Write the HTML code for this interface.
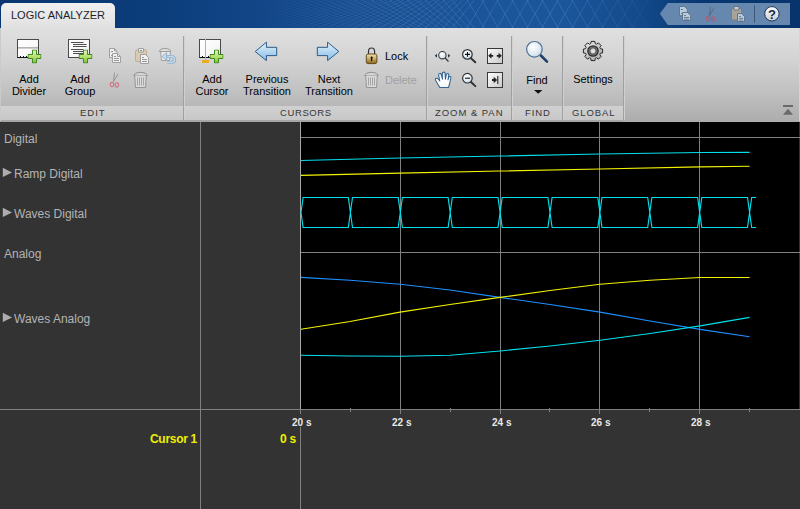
<!DOCTYPE html>
<html><head><meta charset="utf-8">
<style>
html,body{margin:0;padding:0;width:800px;height:509px;overflow:hidden;background:#333;}
body{position:relative;font-family:"Liberation Sans",sans-serif;}
.a{position:absolute;white-space:nowrap;}
#title{left:0;top:0;width:800px;height:28px;background:linear-gradient(90deg,#083670 0px,#0b3d7a 150px,#14498c 300px,#1a5398 450px,#1b569b 560px,#134a8b 640px,#083670 700px,#07346c 800px);}
#tab{left:1px;top:3px;width:114px;height:26px;border-radius:5px 5px 0 0;background:linear-gradient(#f0f0f0,#e0e0e0);}
#toolbar{left:0;top:28px;width:800px;height:94px;background:linear-gradient(#e0e0e0 0px,#d4d4d4 30px,#c0c0c0 65px,#adadad 93px);}
#band{left:0;top:106px;width:623px;height:14px;background:linear-gradient(#d0d0d0,#c8c8c8);}
#tbline{left:0;top:120px;width:623px;height:1.5px;background:#a6a6a6;}
.lbl{font-size:11px;color:#000;line-height:12px;text-align:center;}
.sec{font-size:9.5px;color:#363636;line-height:12px;}
.sep{width:1px;background:#a0a0a0;box-shadow:1px 0 0 #d0d0d0;}
.sig{font-size:12px;color:#b4b4b4;line-height:14px;}
</style></head><body>
<div id="title" class="a"></div>

<svg class="a" style="left:0;top:0;" width="800" height="28" viewBox="0 0 800 28">
<defs>
<linearGradient id="meshmask" x1="0" y1="0" x2="1" y2="0"><stop offset="0.32" stop-color="#fff" stop-opacity="0"/><stop offset="0.5" stop-color="#fff" stop-opacity="0.8"/><stop offset="0.7" stop-color="#fff" stop-opacity="1"/><stop offset="0.79" stop-color="#fff" stop-opacity="0.4"/><stop offset="0.83" stop-color="#fff" stop-opacity="0"/></linearGradient>
<mask id="mm"><rect x="0" y="0" width="800" height="28" fill="url(#meshmask)"/></mask>
<linearGradient id="gqhelp" x1="0" y1="0" x2="0" y2="1"><stop offset="0" stop-color="#ffffff"/><stop offset="1" stop-color="#c8d0d8"/></linearGradient>
</defs>
<g mask="url(#mm)" fill="none" stroke="#7aa4d8" stroke-opacity="0.35" stroke-width="0.8">
<path d="M200.0,28L290.0,0M209.0,28L299.0,0M218.0,28L308.0,0M227.0,28L317.0,0M236.0,28L326.0,0M245.0,28L335.0,0M254.0,28L344.0,0M263.0,28L351.9,0M272.0,28L357.8,0M281.0,28L363.6,0M290.0,28L369.4,0M299.0,28L375.3,0M308.0,28L381.1,0M317.0,28L386.9,0M326.0,28L392.7,0M335.0,28L398.6,0M344.0,28L404.4,0M353.0,28L410.2,0M362.0,28L416.1,0M371.0,28L421.9,0M380.0,28L427.7,0M389.0,28L433.5,0M398.0,28L439.4,0M407.0,28L445.2,0M416.0,28L451.0,0M425.0,28L456.9,0M434.0,28L462.7,0M443.0,28L468.5,0M452.0,28L474.3,0M467.0,28L484.1,0M482.0,28L498.0,0M497.0,28L513.0,0M512.0,28L528.0,0M527.0,28L543.0,0M542.0,28L558.0,0M557.0,28L573.0,0M572.0,28L588.0,0M587.0,28L603.0,0M602.0,28L618.0,0M617.0,28L633.0,0M632.0,28L648.0,0M647.0,28L663.0,0M662.0,28L678.0,0M677.0,28L693.0,0M692.0,28L708.0,0"/>
<path d="M200.0,0L290.0,28M209.0,0L299.0,28M218.0,0L308.0,28M227.0,0L317.0,28M236.0,0L326.0,28M245.0,0L335.0,28M254.0,0L344.0,28M263.0,0L351.9,28M272.0,0L357.8,28M281.0,0L363.6,28M290.0,0L369.4,28M299.0,0L375.3,28M308.0,0L381.1,28M317.0,0L386.9,28M326.0,0L392.7,28M335.0,0L398.6,28M344.0,0L404.4,28M353.0,0L410.2,28M362.0,0L416.1,28M371.0,0L421.9,28M380.0,0L427.7,28M389.0,0L433.5,28M398.0,0L439.4,28M407.0,0L445.2,28M416.0,0L451.0,28M425.0,0L456.9,28M434.0,0L462.7,28M443.0,0L468.5,28M452.0,0L474.3,28M467.0,0L484.1,28M482.0,0L498.0,28M497.0,0L513.0,28M512.0,0L528.0,28M527.0,0L543.0,28M542.0,0L558.0,28M557.0,0L573.0,28M572.0,0L588.0,28M587.0,0L603.0,28M602.0,0L618.0,28M617.0,0L633.0,28M632.0,0L648.0,28M647.0,0L663.0,28M662.0,0L678.0,28M677.0,0L693.0,28M692.0,0L708.0,28"/>
</g>
<path d="M659.8,13.8L667.8,3H790V25H667.8Z" fill="#6687ae"/>
<g>
<path d="M679.5,6.5H684.5L687.3,9.3V15.7H679.5Z" fill="#b8cadc" stroke="#60768e"/>
<path d="M682.5,12.5H687.5L690.5,15.5V20.5H682.5Z" fill="#b8cadc" stroke="#60768e"/>
<path d="M681,9.5H683M681,13.5H682M684,15.5H686M684,17.5H689M684,19.2H689" stroke="#60768e" stroke-width="0.9"/>
</g>
<path d="M710.4,6.5L709.6,15.6M714,7.7L709.6,15.6" stroke="#55667a" stroke-width="0.9"/>
<ellipse cx="708" cy="18.5" rx="1.5" ry="2.1" fill="none" stroke="#b05a70" stroke-width="1.1"/>
<ellipse cx="713" cy="18.9" rx="1.5" ry="2.1" fill="none" stroke="#b05a70" stroke-width="1.1"/>
<g>
<rect x="731.5" y="8.5" width="10" height="11.5" rx="1" fill="#a8a498" stroke="#807c72"/>
<path d="M734,10V6.5H739V10Z" fill="#c4ccd4" stroke="#6a7684"/>
<path d="M737.5,13.5H741.5L744.5,16.5V21.5H737.5Z" fill="#b8cadc" stroke="#60768e"/>
<path d="M739,16.5H741M739,18.3H743M739,20H743" stroke="#60768e" stroke-width="0.9"/>
</g>
<path d="M754.5,5.3V22.7" stroke="#3f5674" stroke-width="1"/>
<circle cx="771.9" cy="13.8" r="7.2" fill="url(#gqhelp)" stroke="#1c3452" stroke-width="1"/>
<text x="772" y="18.6" text-anchor="middle" font-family="Liberation Sans" font-weight="bold" font-size="13" fill="#1a2a3e">?</text>
</svg>

<div id="tab" class="a"></div>
<div class="a" style="left:11px;top:9px;font-size:11px;color:#1e1e2a;line-height:12px;">LOGIC ANALYZER</div>
<div id="toolbar" class="a"></div>
<div id="band" class="a"></div>
<div id="tbline" class="a"></div>
<div class="a" style="left:0;top:28px;width:1px;height:93px;background:#cacaca;"></div>
<div class="a" style="left:799px;top:28px;width:1px;height:93px;background:#d4d4d4;"></div>

<!-- separators -->
<div class="a sep" style="left:183px;top:36px;height:84px;"></div>
<div class="a sep" style="left:426px;top:36px;height:84px;"></div>
<div class="a sep" style="left:511px;top:36px;height:84px;"></div>
<div class="a sep" style="left:562px;top:36px;height:84px;"></div>
<div class="a sep" style="left:623px;top:36px;height:84px;"></div>

<!-- toolbar labels -->
<div class="a lbl" style="left:4px;top:73px;width:50px;">Add<br>Divider</div>
<div class="a lbl" style="left:55px;top:73px;width:50px;">Add<br>Group</div>
<div class="a lbl" style="left:187px;top:73px;width:50px;">Add<br>Cursor</div>
<div class="a lbl" style="left:237px;top:73px;width:60px;">Previous<br>Transition</div>
<div class="a lbl" style="left:299px;top:73px;width:60px;">Next<br>Transition</div>
<div class="a lbl" style="left:385px;top:50px;text-align:left;">Lock</div>
<div class="a lbl" style="left:385px;top:74px;text-align:left;color:#a0a0a0;">Delete</div>
<div class="a lbl" style="left:512px;top:74px;width:50px;">Find</div>
<div class="a lbl" style="left:563px;top:73px;width:60px;">Settings</div>

<div class="a sec" style="left:80px;top:107px;letter-spacing:1px;">EDIT</div>
<div class="a sec" style="left:280px;top:107px;letter-spacing:0.6px;">CURSORS</div>
<div class="a sec" style="left:435px;top:107px;letter-spacing:0.95px;">ZOOM &amp; PAN</div>
<div class="a sec" style="left:525px;top:107px;letter-spacing:0.9px;">FIND</div>
<div class="a sec" style="left:572px;top:107px;letter-spacing:0.9px;">GLOBAL</div>


<!-- toolbar icons -->
<svg class="a" style="left:0;top:0;" width="800" height="122" viewBox="0 0 800 122">
<defs>
<linearGradient id="gpl" x1="0" y1="0" x2="0" y2="1"><stop offset="0" stop-color="#e6f7c0"/><stop offset="0.5" stop-color="#b6e070"/><stop offset="1" stop-color="#7cc040"/></linearGradient>
<linearGradient id="gbox" x1="0" y1="0" x2="1" y2="1"><stop offset="0" stop-color="#ffffff"/><stop offset="0.6" stop-color="#f8f8f8"/><stop offset="1" stop-color="#dcdcdc"/></linearGradient>
<linearGradient id="garr" x1="0" y1="0" x2="0" y2="1"><stop offset="0" stop-color="#e4f2fb"/><stop offset="1" stop-color="#86bce6"/></linearGradient>
<linearGradient id="glock" x1="0" y1="0" x2="0" y2="1"><stop offset="0" stop-color="#f2e2b0"/><stop offset="0.45" stop-color="#cdb070"/><stop offset="1" stop-color="#8a6418"/></linearGradient>
<linearGradient id="gfit" x1="0" y1="0" x2="1" y2="1"><stop offset="0" stop-color="#ffffff"/><stop offset="1" stop-color="#c8c8c8"/></linearGradient>
<radialGradient id="glass" cx="0.4" cy="0.35" r="0.7"><stop offset="0" stop-color="#ffffff"/><stop offset="0.7" stop-color="#dde8f0"/><stop offset="1" stop-color="#c0d4e4"/></radialGradient>
<linearGradient id="ghand" x1="0" y1="0" x2="0" y2="1"><stop offset="0" stop-color="#dce8f2"/><stop offset="0.5" stop-color="#ffffff"/><stop offset="1" stop-color="#f4f4f4"/></linearGradient>
<symbol id="plus" viewBox="0 0 14 14"><path d="M5,0.5H9V5H13.5V9H9V13.5H5V9H0.5V5H5Z" fill="url(#gpl)" stroke="#3f8a1e" stroke-width="1" stroke-linejoin="round"/></symbol>
</defs>
<!-- Add Divider -->
<rect x="17.5" y="39.5" width="21" height="18" fill="url(#gbox)" stroke="#4a4a4a"/>
<rect x="18" y="47" width="20" height="1.6" fill="#b4b4b4"/>
<path d="M17.5,57.5H38.5M20.5,57.5V56M23.5,57.5V56M26.5,57.5V56" stroke="#111" stroke-width="1" fill="none"/>
<use href="#plus" x="27.5" y="49.5" width="14" height="14"/>
<!-- Add Group -->
<rect x="68.5" y="39.5" width="21" height="18" fill="url(#gbox)" stroke="#4a4a4a"/>
<path d="M71,42.5H83.5M73,44.5H86.5M73,46.5H86.5M71,49.5H83.5M73,51.5H86.5M73,53.5H86.5" stroke="#3a3a3a" stroke-width="0.9" fill="none"/>
<use href="#plus" x="78.5" y="49.5" width="14" height="14"/>
<!-- copy -->
<g stroke="#a0a0a0" stroke-width="1" fill="#f0f0f0">
<path d="M109.5,48.5H114.5L117,51V57.5H109.5Z"/>
<path d="M112.5,53.5H117.5L120.5,56.5V62.5H112.5Z"/>
</g>
<path d="M114.5,48.5V51H117" fill="none" stroke="#a0a0a0"/>
<path d="M117.5,53.5V56.5H120.5" fill="none" stroke="#a0a0a0"/>
<path d="M111,51.5H113M111,55.5H112.5M114,56.5H116M114,58.5H119M114,60.5H119" stroke="#8c8c8c" stroke-width="0.9"/>
<!-- paste -->
<rect x="135.5" y="50" width="11" height="11.5" rx="1.2" fill="#dacaae" stroke="#bdae92"/>
<path d="M138.5,52V48.5H143.5V52Z" fill="#ececec" stroke="#a0a0a0"/>
<path d="M140,50.5H142" stroke="#909090"/>
<path d="M140.5,54.5H145.5L148.5,57.5V63.5H140.5Z" fill="#f0f0f0" stroke="#a0a0a0"/>
<path d="M142,57.5H144M142,59.5H147M142,61.5H147" stroke="#8c8c8c" stroke-width="0.9"/>
<!-- undo delete -->
<path d="M160.5,51.5L161.5,60.5H169.5L170.5,51.5" fill="#e6e6e6" stroke="#a2a2a2"/>
<path d="M159.3,51.5Q159.8,48.6 165,48.4Q170.2,48.6 170.7,51.5Z" fill="#dcdcdc" stroke="#9c9c9c"/>
<path d="M165,56.5H170.5Q174.6,56.5 174.6,59.5Q174.6,62.5 170.5,62.5H167.5" fill="none" stroke="#8fb0cc" stroke-width="3.2"/>
<path d="M165,56.5H170.5Q174.6,56.5 174.6,59.5Q174.6,62.5 170.5,62.5H167.5" fill="none" stroke="#c4dbee" stroke-width="1.4"/>
<path d="M162.2,56.5L166.6,52.6V60.4Z" fill="#c4dbee" stroke="#8fb0cc" stroke-width="0.9" stroke-linejoin="round"/>
<!-- cut -->
<path d="M114.5,72.5L113.5,81.5M118,74L113.5,81.5" stroke="#959595" stroke-width="1" fill="none"/>
<ellipse cx="112" cy="84.5" rx="1.7" ry="2.2" fill="none" stroke="#d07080" stroke-width="1.1"/>
<ellipse cx="116.9" cy="85" rx="1.7" ry="2.2" fill="none" stroke="#d07080" stroke-width="1.1"/>
<!-- trash -->
<g id="trash">
<path d="M133.5,75.5Q135,72.3 140.5,72.3Q146,72.3 147.5,75.5Z" fill="#d6d6d6" stroke="#8e8e8e"/>
<path d="M134.7,75.5L135.5,87.5H145.5L146.3,75.5" fill="#dadada" stroke="#959595"/>
<path d="M137.5,77.5V85.5M139.5,77.5V85.5M141.5,77.5V85.5M143.5,77.5V85.5" stroke="#a4a4a4" stroke-width="1"/>
</g>
<use href="#trash" x="231" y="0"/>
<!-- Add Cursor -->
<rect x="199.5" y="39.5" width="21" height="18" fill="url(#gbox)" stroke="#4a4a4a"/>
<path d="M199.5,57.5H220.5M202.5,57.5V56M208.5,57.5V56" stroke="#111" stroke-width="1" fill="none"/>
<path d="M205.5,38.5V60" stroke="#f0aa20" stroke-width="1"/>
<rect x="202" y="60" width="7" height="3" fill="#f0aa20"/>
<use href="#plus" x="209.5" y="49.5" width="14" height="14"/>
<!-- prev/next arrows -->
<path d="M255.2,51.5L266.4,42.2V47.3H276.7V55.6H266.4V60.6Z" fill="url(#garr)" stroke="#2c5a88" stroke-width="1" stroke-linejoin="miter"/>
<path d="M338.8,51.5L327.6,42.2V47.3H317.3V55.6H327.6V60.6Z" fill="url(#garr)" stroke="#2c5a88" stroke-width="1" stroke-linejoin="miter"/>
<!-- lock -->
<path d="M368.5,54V51.5Q368.5,48 371.5,48Q374.6,48 374.6,51.5V54" fill="none" stroke="#333" stroke-width="1.2"/>
<rect x="366.3" y="54" width="10.6" height="9.6" rx="1.8" fill="url(#glock)" stroke="#5a4010" stroke-width="0.9"/>
<path d="M371.6,57.3V61" stroke="#111" stroke-width="1.3"/>
<circle cx="371.6" cy="57.6" r="1" fill="#111"/>
<!-- zoom x -->
<circle cx="442.4" cy="55.2" r="3.7" fill="url(#glass)" stroke="#3a3a3a" stroke-width="1.1"/>
<path d="M445.2,58L448.5,61.5" stroke="#3a3a3a" stroke-width="1.3"/>
<path d="M434.8,55.8L437,53.8V57.8Z M450.3,55.8L448.1,53.8V57.8Z" fill="#333"/>
<!-- zoom in / out -->
<circle cx="467.4" cy="54.4" r="4.8" fill="url(#glass)" stroke="#333" stroke-width="1.2"/>
<path d="M471,58.2L475.3,62.3" stroke="#333" stroke-width="2" stroke-linecap="round"/>
<path d="M465,54.4H470M467.5,52V56.8" stroke="#111" stroke-width="1.1"/>
<circle cx="467.4" cy="78.2" r="4.8" fill="url(#glass)" stroke="#333" stroke-width="1.2"/>
<path d="M471,82L475.3,86.1" stroke="#333" stroke-width="2" stroke-linecap="round"/>
<path d="M465,78.2H470" stroke="#111" stroke-width="1.1"/>
<!-- fit boxes -->
<rect x="487.5" y="48.5" width="15" height="15" fill="url(#gfit)" stroke="#383838"/>
<path d="M488.2,55.8L491.4,52.8V58.8Z M501.8,55.8L498.6,52.8V58.8Z" fill="#222"/>
<path d="M490.5,55.8H493.2M496.8,55.8H499.5" stroke="#222" stroke-width="1.8"/>
<rect x="487.5" y="72.5" width="15" height="15" fill="url(#gfit)" stroke="#383838"/>
<path d="M492,80H495" stroke="#222" stroke-width="2"/>
<path d="M497.2,80L493.6,76.8V83.2Z" fill="#222"/>
<path d="M497.8,76V84" stroke="#222" stroke-width="1.1"/>
<!-- hand -->
<path d="M439.8,87.5L435.6,80.2Q435,78.6 436.4,78.3Q437.6,78.1 438.6,79.5L439.8,81L438.6,75.2Q438.4,73.6 439.8,73.4Q441.1,73.3 441.4,74.8L442.4,79.2L442.3,73.6Q442.4,72.1 443.8,72.1Q445.1,72.1 445.2,73.6L445.4,79.2L446.3,74.6Q446.7,73.3 447.9,73.5Q449,73.8 448.8,75.1L448,79.8L448.7,77.5Q449.2,76.3 450.3,76.6Q451.2,76.9 450.9,78.2L448.6,87.5Z" fill="url(#ghand)" stroke="#34648f" stroke-width="1.05" stroke-linejoin="round"/>
<!-- find -->
<path d="M540.6,55.3L547,61.6" stroke="#1d3f68" stroke-width="2.6" stroke-linecap="round"/>
<circle cx="534.4" cy="49.3" r="7.8" fill="url(#glass)" stroke="#4e7294" stroke-width="1.2"/>
<path d="M534,90L538.2,93.8L542.4,90Z" fill="#111"/>
<!-- gear -->
<g transform="translate(593,51)">
<radialGradient id="ggear" cx="0.4" cy="0.35" r="0.7"><stop offset="0" stop-color="#f4f4f4"/><stop offset="1" stop-color="#a8a8a8"/></radialGradient>
<path d="M-2.28,-7.36L-1.95,-9.60L1.95,-9.60L2.28,-7.36L3.59,-6.81L5.41,-8.17L8.17,-5.41L6.81,-3.59L7.36,-2.28L9.60,-1.95L9.60,1.95L7.36,2.28L6.81,3.59L8.17,5.41L5.41,8.17L3.59,6.81L2.28,7.36L1.95,9.60L-1.95,9.60L-2.28,7.36L-3.59,6.81L-5.41,8.17L-8.17,5.41L-6.81,3.59L-7.36,2.28L-9.60,1.95L-9.60,-1.95L-7.36,-2.28L-6.81,-3.59L-8.17,-5.41L-5.41,-8.17L-3.59,-6.81Z" fill="url(#ggear)" stroke="#2a2a2a" stroke-width="1" stroke-linejoin="round"/>
<circle r="5.2" fill="#7c7c7c" stroke="#2a2a2a" stroke-width="1.3"/>
<circle r="3.3" fill="#bdbdbd" stroke="#4a4a4a" stroke-width="1"/>
<circle r="2" fill="#e2e2e2"/>
</g>
<!-- collapse -->
<rect x="783" y="105" width="10" height="2" fill="#6a6a6a"/>
<path d="M783,114.7L788,108.7L793,114.7Z" fill="#6a6a6a"/>
</svg>

<!-- plot -->
<svg class="a" style="left:0;top:0;" width="800" height="509" viewBox="0 0 800 509">
<rect x="301" y="122" width="498" height="287" fill="#000"/>
<g stroke="#808080" stroke-width="1" shape-rendering="crispEdges">
<line x1="200.5" y1="122" x2="200.5" y2="509"/>
<line x1="300.5" y1="409" x2="300.5" y2="414"/>
<line x1="300.5" y1="122" x2="300.5" y2="409" stroke="#a8a8a8"/>
<line x1="300.5" y1="427" x2="300.5" y2="509"/>
<line x1="400.5" y1="122" x2="400.5" y2="414"/>
<line x1="500.5" y1="122" x2="500.5" y2="414"/>
<line x1="599.5" y1="122" x2="599.5" y2="414"/>
<line x1="699.5" y1="122" x2="699.5" y2="414"/>
<line x1="350.5" y1="408" x2="350.5" y2="412"/>
<line x1="450.5" y1="408" x2="450.5" y2="412"/>
<line x1="549.5" y1="408" x2="549.5" y2="412"/>
<line x1="649.5" y1="408" x2="649.5" y2="412"/>
<line x1="749.5" y1="408" x2="749.5" y2="412"/>
<line x1="301" y1="137.5" x2="800" y2="137.5"/>
<line x1="301" y1="252.5" x2="800" y2="252.5"/>
<line x1="0" y1="409.5" x2="800" y2="409.5"/>
</g>
<g fill="none" stroke-width="1.15" stroke-linejoin="round">
<polyline stroke="#00e0ec" points="301,160.5 400,158 500,156 600,154 700,152.5 749.6,152.3"/>
<polyline stroke="#f2f200" points="301,175.4 400,173.1 500,171 600,169 700,166.9 749.6,166.3"/>
<polyline stroke="#1e90ff" points="301,277.4 350,280.2 400,284.2 450,290 500,297.4 550,304.5 600,312.1 650,321 700,329.4 749.6,336.7"/>
<polyline stroke="#f2f200" points="301,329.2 350,321.5 400,312.1 450,304.5 500,297.4 550,290.5 600,284.2 650,280.2 700,277.5 749.6,277.5"/>
<polyline stroke="#00e0ec" points="301,355.3 350,356 400,356.3 450,355.3 500,351 550,346 600,340.2 650,333.5 700,325.9 749.6,317.4"/>
</g>
<path fill="none" stroke="#00e0ec" stroke-width="1.15" d="M301.0,212.5L303.1,197.5L348.3,197.5L350.4,212.5L348.3,227.5L303.1,227.5ZM350.4,212.5L352.5,197.5L398.2,197.5L400.3,212.5L398.2,227.5L352.5,227.5ZM400.3,212.5L402.4,197.5L448.1,197.5L450.2,212.5L448.1,227.5L402.4,227.5ZM450.2,212.5L452.3,197.5L498.0,197.5L500.1,212.5L498.0,227.5L452.3,227.5ZM500.1,212.5L502.2,197.5L547.9,197.5L550.0,212.5L547.9,227.5L502.2,227.5ZM550.0,212.5L552.1,197.5L597.8,197.5L599.9,212.5L597.8,227.5L552.1,227.5ZM599.9,212.5L602.0,197.5L647.7,197.5L649.8,212.5L647.7,227.5L602.0,227.5ZM649.8,212.5L651.9,197.5L697.6,197.5L699.7,212.5L697.6,227.5L651.9,227.5ZM699.7,212.5L701.8,197.5L747.5,197.5L749.6,212.5L747.5,227.5L701.8,227.5ZM749.6,212.5L751.7,197.5L756,197.5M749.6,212.5L751.7,227.5L756,227.5"/>
</svg>

<div class="a sig" style="left:4px;top:132px;">Digital</div>
<div class="a sig" style="left:14px;top:167px;">Ramp Digital</div>
<div class="a sig" style="left:14px;top:207px;">Waves Digital</div>
<div class="a sig" style="left:4px;top:247px;">Analog</div>
<div class="a sig" style="left:14px;top:312px;">Waves Analog</div>
<svg class="a" style="left:0;top:0;" width="20" height="330" viewBox="0 0 20 330">
<path d="M2.8,167.8L12,172.4L2.8,177.1Z M2.8,207.8L12,212.4L2.8,217.1Z M2.8,312.8L12,317.4L2.8,322.1Z" fill="#adadad"/>
</svg>

<div class="a" style="left:292px;top:417px;font-size:10px;font-weight:bold;color:#e8e8e8;line-height:12px;">20 s</div>
<div class="a" style="left:392px;top:417px;font-size:10px;font-weight:bold;color:#e8e8e8;line-height:12px;">22 s</div>
<div class="a" style="left:492px;top:417px;font-size:10px;font-weight:bold;color:#e8e8e8;line-height:12px;">24 s</div>
<div class="a" style="left:591px;top:417px;font-size:10px;font-weight:bold;color:#e8e8e8;line-height:12px;">26 s</div>
<div class="a" style="left:691px;top:417px;font-size:10px;font-weight:bold;color:#e8e8e8;line-height:12px;">28 s</div>
<div class="a" style="left:150px;top:432px;font-size:12px;font-weight:bold;color:#eeee00;line-height:14px;letter-spacing:-0.3px;">Cursor 1</div>
<div class="a" style="left:280px;top:432px;font-size:12px;font-weight:bold;color:#eeee00;line-height:14px;letter-spacing:-0.3px;">0 s</div>
</body></html>
